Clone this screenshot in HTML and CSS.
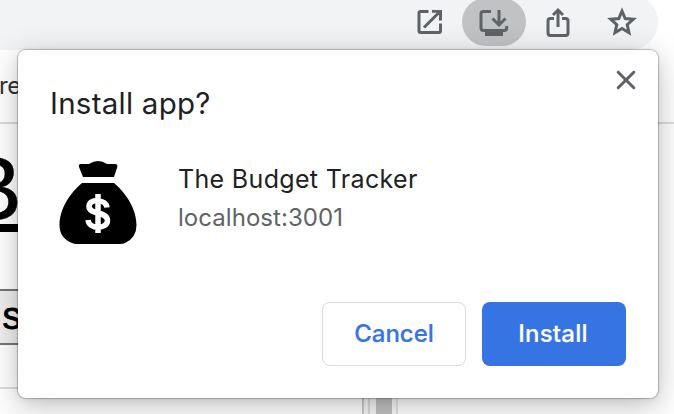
FILE: index.html
```html
<!DOCTYPE html>
<html lang="en">
<head>
<meta charset="utf-8">
<title>Install app</title>
<link rel="stylesheet" href="styles.css">
</head>
<body>
<div class="window">
  <header class="toolbar">
    <div class="omnibox">
      <span class="action"><svg viewBox="0 0 32 32"><path d="M14.500 5.500H6.500Q5 5.500 5 7V25Q5 26.500 6.500 26.500H25Q26.500 26.500 26.500 25V17.500M10 21.500 24.500 7"/><path class="solid" d="M18 4H28V14.500H25V9L22.500 6.800H18Z"/></svg></span>
      <span class="action active"><svg viewBox="0 0 32 32"><path d="M13 5.500H5.500Q3 5.500 3 8V22Q3 24.500 5.500 24.500H26Q28.700 24.500 28.700 22V20M21 4V17.500M14.500 12.500 21 19 27.500 12.500"/><path class="solid" d="M7 24H25V30H7Z"/></svg></span>
      <span class="action"><svg viewBox="0 0 32 32"><path d="M12 12.500H8.500Q6 12.500 6 15V26.500Q6 29.500 8.500 29.500H23.500Q26 29.500 26 26.500V15Q26 12.500 23.500 12.500H20M16 21V4.500M11 9 16 4 21 9"/></svg></span>
      <span class="action"><svg viewBox="0 0 32 32"><path class="star" d="M16 5 19.200 12.500 27.300 13.200 21.200 18.700 23 26.700 16 22.500 9 26.700 10.800 18.700 4.700 13.200 12.800 12.500Z"/></svg></span>
    </div>
  </header>
  <nav class="bookmarks"><span>re</span></nav>
  <main class="page">
    <div class="heading"><span>B</span></div>
    <div class="field"><span>ls</span></div>
  </main>
  <div class="devtools"><div class="pane"></div><div class="gutter"></div><div class="thumb"></div><div class="edge"></div></div>
</div>
<section class="dialog" role="dialog" aria-label="Install app?">
  <div class="title-row">
    <h1>Install app?</h1>
    <svg class="close" viewBox="0 0 20 20"><path d="M2.200 2.200 17.800 17.800M17.800 2.200 2.200 17.800"/></svg>
  </div>
  <div class="app">
    <svg class="bag" viewBox="0 0 80 86"><path d="M22 4H30Q39 -2 48 4H56Q59 4 58.300 7L55 17H24L20 7Q19 4 22 4ZM23 23H55C67 33 77.500 49 77.500 65Q77.500 78 66 83Q64 84 61 84H18Q15 84 13 83Q.5 78 .5 65C.5 49 11 33 23 23Z"/><path class="dollar" d="M39 34V73M48 47.500C47 39 30 38 30 46.500C30 55 48.500 51 48.500 60.500C48.500 69.500 30 69.500 29 60"/></svg>
    <div class="details"><div class="name">The Budget Tracker</div><div class="origin">localhost:3001</div></div>
  </div>
  <div class="buttons"><button class="cancel">Cancel</button><button class="install">Install</button></div>
</section>
</body>
</html>
```
FILE: styles.css
```css
* { box-sizing: border-box; }
body { margin: 0; width: 674px; height: 414px; overflow: hidden; background: #fff; font-family: Inter, "Liberation Sans", sans-serif; }
.window { display: flex; flex-direction: column; height: 414px; }
.toolbar { height: 50px; overflow: hidden; }
.omnibox { display: flex; justify-content: flex-end; width: 658px; height: 56px; margin-top: -6px; padding: 4px 4px 0; background: #f1f3f4; border-radius: 0 28px 28px 0; }
.action { display: flex; align-items: center; justify-content: center; width: 64px; height: 48px; border-radius: 24px; }
.action.active { background: #c1c2c3; }
.action svg { width: 32px; height: 32px; fill: none; stroke: #5f6368; stroke-width: 3; }
.action .solid { fill: #5f6368; stroke: none; }
.bookmarks { height: 74px; flex: none; border-bottom: 2px solid #dadce0; padding-top: 22px; font-size: 24px; line-height: 28px; color: #303134; }
.bookmarks span { display: inline-block; margin-left: -1px; letter-spacing: -.3px; }
.page { width: 362px; height: 265px; flex: none; border-bottom: 2px solid #dadce0; }
.heading { width: 22px; height: 108px; border-bottom: 8px solid #000; display: flex; justify-content: flex-end; font: 91px/129px "Liberation Sans", sans-serif; }
.heading span { -webkit-text-stroke: .5px #000; }
.field { margin-top: 57px; height: 56px; border: solid #767676; border-width: 2px 0; background: #efefef; font: 38px/51px "Liberation Sans", sans-serif; }
.field span { display: inline-block; margin-left: -7px; letter-spacing: 1px; -webkit-text-stroke: .8px #000; }
.devtools { display: flex; height: 25px; background: #fff; }
.pane { width: 364px; border-right: 2px solid #cacaca; background: #fff; }
.gutter { width: 12px; border-left: 4px solid #f6f6f6; background: linear-gradient(90deg, #dadada 2px, #f6f6f6 2px); }
.thumb { width: 16px; background: #c1c1c1; }
.edge { width: 6px; border-right: 2px solid #e4e4e4; background: #fafafa; }
.dialog { position: absolute; left: 18px; top: 50px; width: 640px; height: 348px; padding: 0 32px 32px; display: flex; flex-direction: column; background: #fff; border-radius: 8px; box-shadow: 0 0 1px 1px rgba(0,0,0,.22), 0 8px 32px rgba(0,0,0,.25), 0 2px 7px rgba(0,0,0,.08); }
.title-row { display: flex; justify-content: space-between; height: 110px; }
h1 { margin: 35px 0 0; font-size: 29.500px; line-height: 36px; font-weight: 400; letter-spacing: .25px; color: #202124; }
.close { width: 20px; height: 20px; margin: 20px -10px 0 0; fill: none; stroke: #5f6368; stroke-width: 3; stroke-linecap: round; }
.app { display: flex; height: 142px; }
.bag { width: 80px; height: 86px; margin-left: 9px; }
.bag .dollar { fill: none; stroke: #fff; stroke-width: 5.500; }
.details { margin: 0 0 0 39px; }
.name { font-size: 25px; line-height: 38px; color: #202124; letter-spacing: .33px; white-space: nowrap; }
.origin { margin-top: 1px; font-size: 24px; line-height: 38px; color: #5f6368; letter-spacing: .05px; }
.buttons { display: flex; justify-content: flex-end; gap: 16px; }
button { width: 144px; height: 64px; border-radius: 8px; font: 500 24px/30px Inter, sans-serif; padding: 0; -webkit-text-stroke: .2px currentColor; }
.cancel { border: 1px solid #dadce0; background: #fff; color: #3574e2; }
.install { border: 0; background: #3574e2; color: #fff; padding-right: 2px; letter-spacing: .2px; }
```
